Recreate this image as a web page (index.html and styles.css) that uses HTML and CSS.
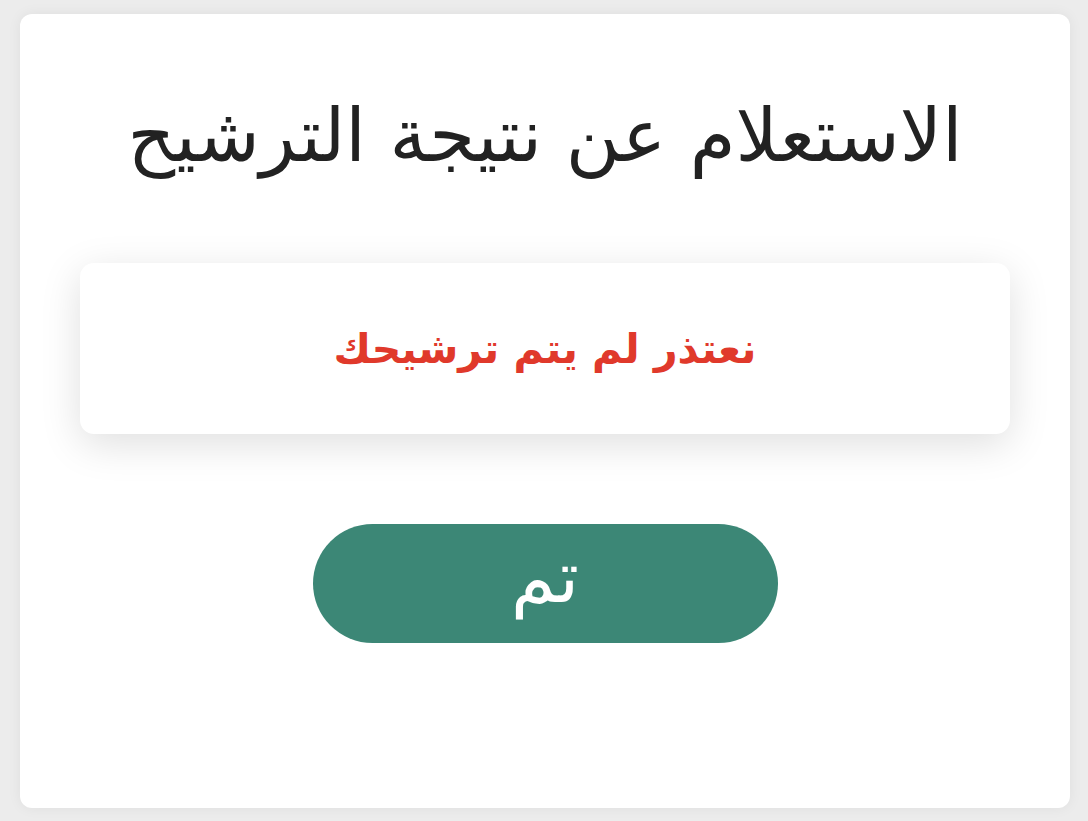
FILE: index.html
```html
<!DOCTYPE html>
<html lang="ar" dir="rtl">
<head>
    <meta charset="UTF-8">
    <meta name="viewport" content="width=device-width, initial-scale=1">
    <title>الاستعلام عن نتيجة الترشيح</title>
    <link rel="stylesheet" href="styles.css">
</head>

<body>
    <div class="card">
        <h1 class="title">الاستعلام عن نتيجة الترشيح</h1>

        <div class="result">
            <p class="result-text">نعتذر لم يتم ترشيحك</p>
        </div>

        <button class="done-btn">تم</button>
    </div>
</body>
</html>
```

FILE: styles.css
```css
html, body {
    height: 100%;
}

body {
    margin: 0;
    padding: 14px 18px 13px 20px;
    box-sizing: border-box;
    background: #ececec;
    font-family: "DejaVu Sans", "Noto Sans", sans-serif;
    color: #222;
}

.card {
    background: white;
    border-radius: 12px;
    height: 100%;
    box-sizing: border-box;
    padding: 76px 60px 0;
    display: flex;
    flex-direction: column;
    align-items: center;
    box-shadow: 0 0 14px rgba(0,0,0,0.06);
}

.title {
    margin: 0;
    font-size: 74px;
    font-weight: normal;
    line-height: 90px;
    color: #222;
}

.result {
    align-self: stretch;
    margin-top: 83px;
    height: 171px;
    background: white;
    border-radius: 14px;
    box-shadow: 0 10px 40px rgba(0,0,0,0.13);
    display: flex;
    align-items: center;
    justify-content: center;
}

.result-text {
    margin: 0;
    font-size: 41px;
    font-weight: 600;
    color: #e0392b;
}

.done-btn {
    margin-top: 90px;
    width: 465px;
    height: 119px;
    padding: 0 0 14px;
    border: none;
    border-radius: 60px;
    background: #3c8776;
    color: white;
    font-family: inherit;
    font-size: 72px;
    font-weight: normal;
    cursor: pointer;
}
```
